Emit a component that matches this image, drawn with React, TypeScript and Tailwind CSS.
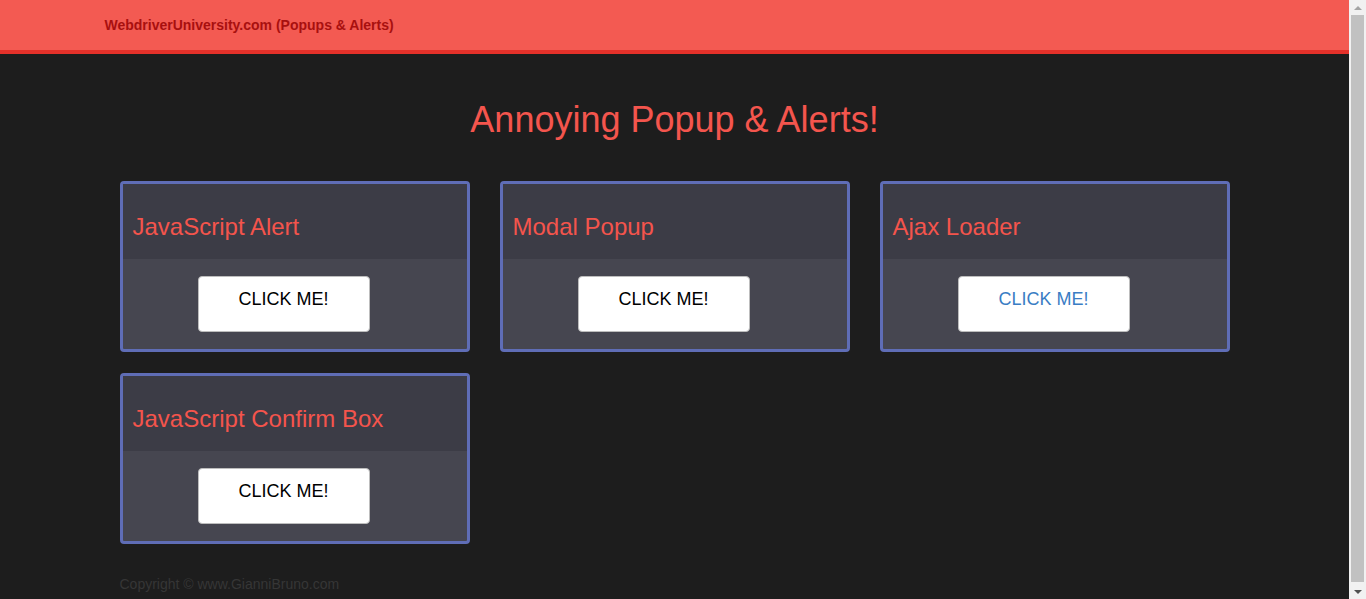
const cards = [
    { title: "JavaScript Alert", blue: false },
    { title: "Modal Popup", blue: false },
    { title: "Ajax Loader", blue: true },
    { title: "JavaScript Confirm Box", blue: false },
];

const Card = ({ title, blue }: { title: string; blue: boolean }) => (
    <div className="w-[350px] h-[171px] border-[3px] border-[#5f6db6] rounded-[4px] bg-[#464650] flex flex-col">
        {/* header */}
        <div className="h-[75px] bg-[#3c3c46] px-[10px] pt-[28px]">
            <h3 className="text-[24px] leading-[30px] text-[#f4544c]">{title}</h3>
        </div>
        {/* body */}
        <div className="pt-[17px] pl-[75px]">
            <button
                className={`w-[172px] h-[56px] bg-white border border-[#bdbdbd] rounded-[4px] text-[18px] pb-[10px] ${
                    blue ? "text-[#3a7dc4]" : "text-black"
                }`}
            >
                CLICK ME!
            </button>
        </div>
    </div>
);

export default function App() {
    return (
        <div className="h-screen flex overflow-hidden bg-[#1d1d1d] font-['Liberation_Sans',Arial,sans-serif]">
            <div className="flex-1 min-w-0">
                {/* navbar */}
                <nav className="h-[54px] bg-[#f35a52] border-b-[4px] border-[#e5312a]">
                    <div className="w-[1170px] mx-auto px-[15px] h-[50px] flex items-center">
                        <span className="text-[14px] font-bold text-[#a8100f]">WebdriverUniversity.com (Popups &amp; Alerts)</span>
                    </div>
                </nav>

                <h1 className="text-center text-[36px] leading-[40px] text-[#f4554d] mt-[46px]">Annoying Popup &amp; Alerts!</h1>

                <div className="w-[1110px] mx-auto mt-[41px] flex flex-wrap gap-x-[30px] gap-y-[21px]">
                    {cards.map((c) => (
                        <Card key={c.title} title={c.title} blue={c.blue} />
                    ))}
                </div>

                <div className="w-[1110px] mx-auto mt-[30px] pb-[20px]">
                    <p className="text-[14px] text-[#363636]">Copyright © www.GianniBruno.com</p>
                </div>
            </div>

            {/* scrollbar */}
            <div className="w-[17px] bg-[#f1f1f1] flex flex-col items-center shrink-0">
                <div className="h-[15px] flex items-center justify-center">
                    <div className="w-0 h-0 border-x-[4px] border-x-transparent border-b-[4px] border-b-[#a3a3a3]" />
                </div>
                <div className="w-[13px] flex-1 bg-[#c1c1c1] mb-[2px]" />
                <div className="h-[15px] flex items-center justify-center">
                    <div className="w-0 h-0 border-x-[4px] border-x-transparent border-t-[4px] border-t-[#505050]" />
                </div>
            </div>
        </div>
    );
}
